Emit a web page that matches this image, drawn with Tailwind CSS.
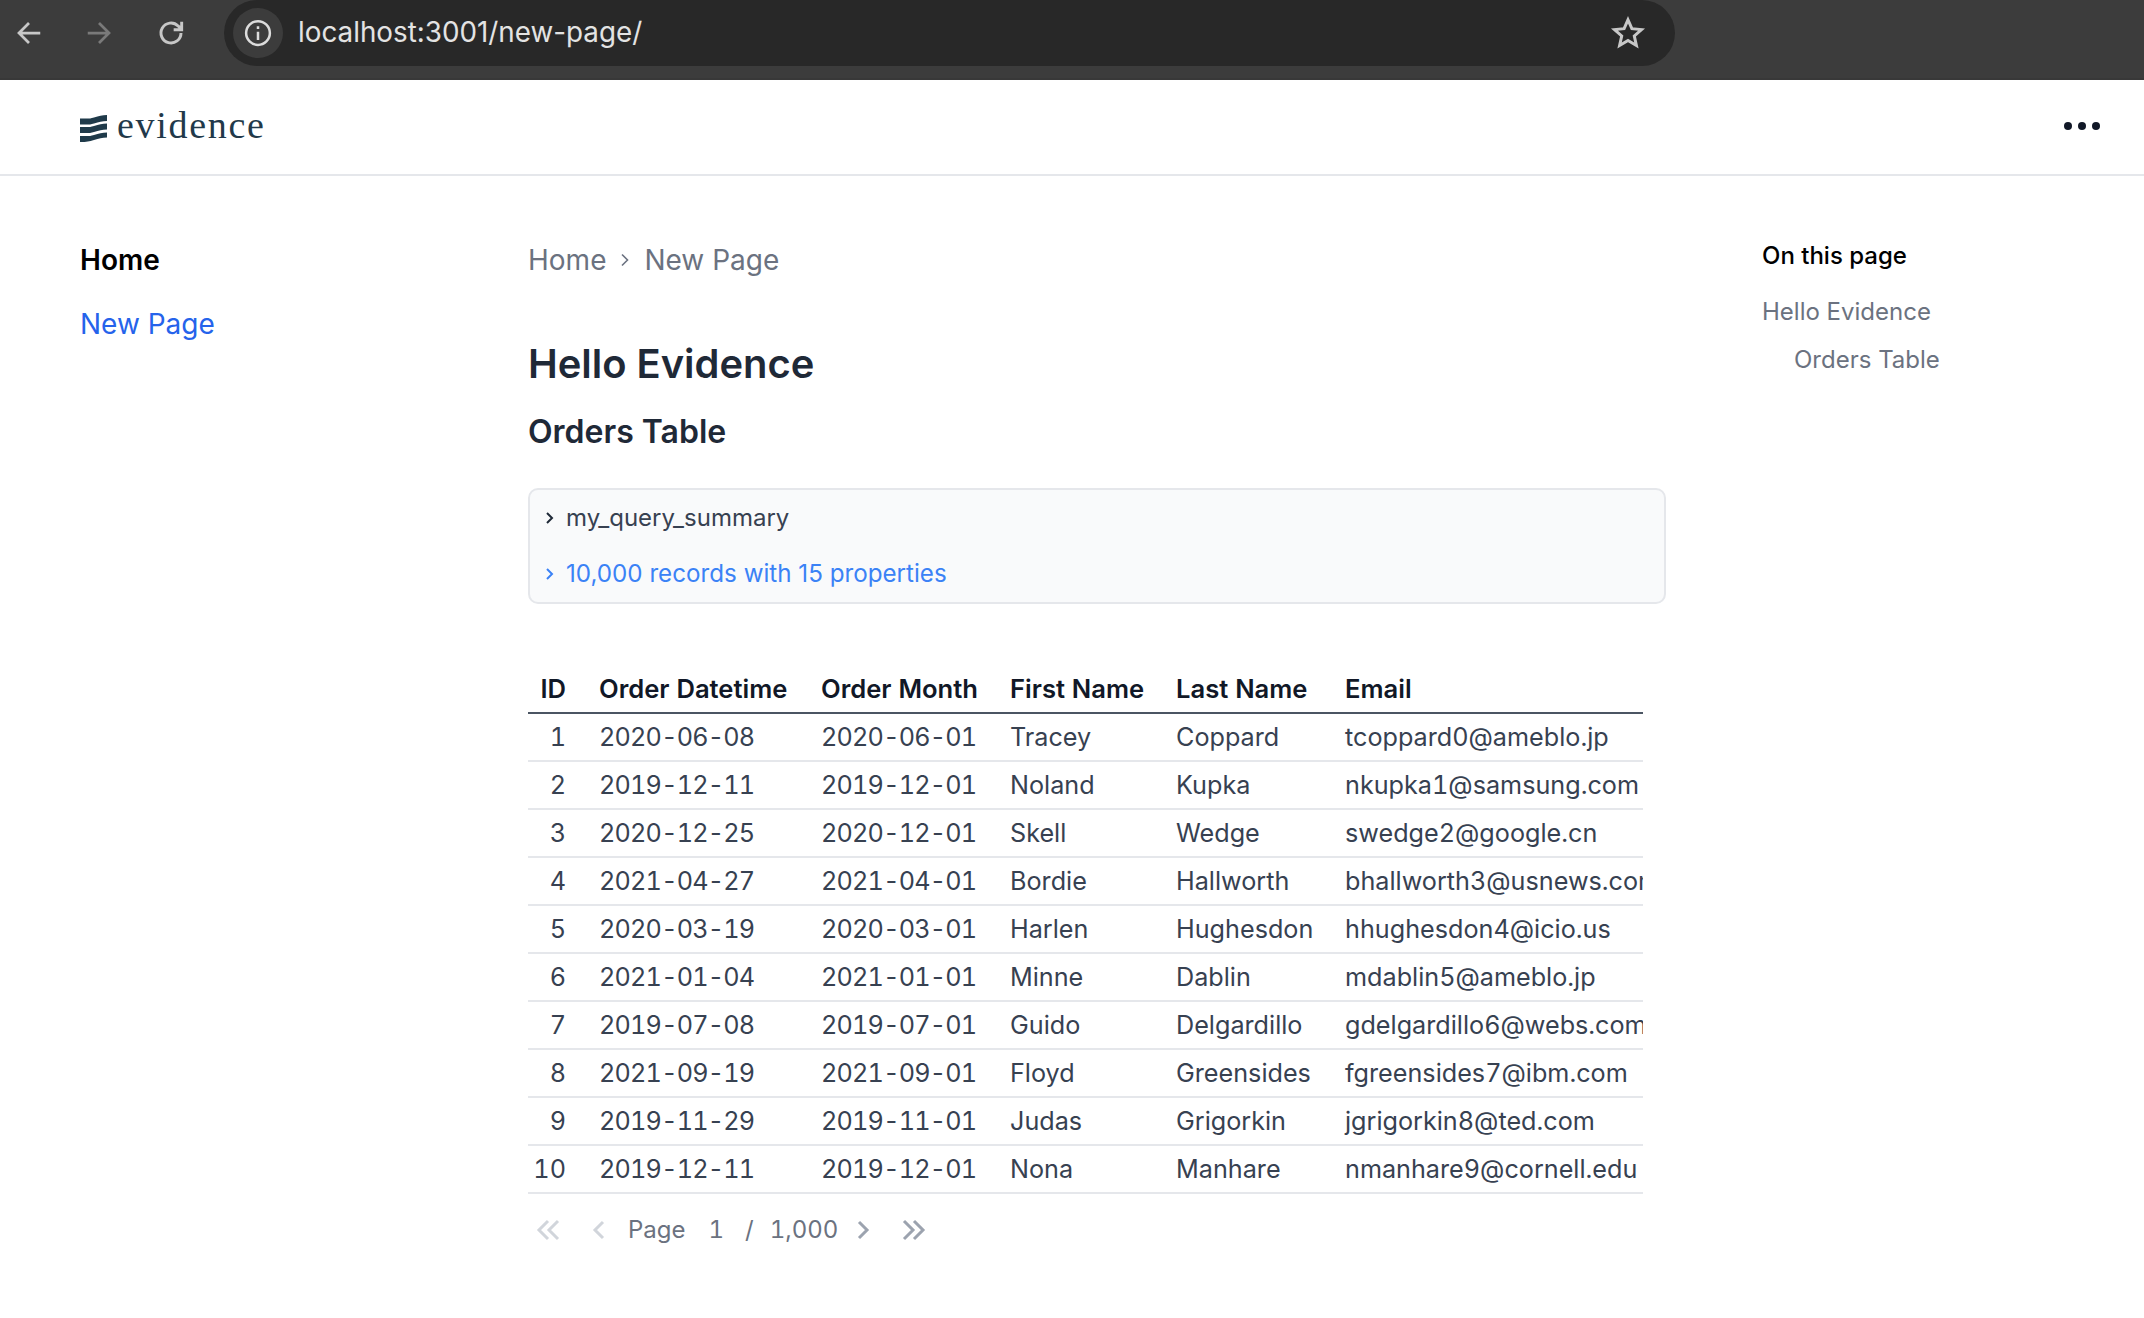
<!DOCTYPE html>
<html lang="en">
<head>
    <meta charset="UTF-8">
    <title>Hello Evidence</title>
    <script src="https://cdn.jsdelivr.net/npm/@tailwindcss/browser@4"></script>
</head>
<body class="bg-white min-h-screen font-['Inter',sans-serif] overflow-hidden">
    <!-- Browser chrome -->
    <div class="h-[80px] bg-[#3c3c3c] border-b-2 border-[#383838] flex items-start">
        <div class="w-[224px] h-[66px] flex items-center shrink-0">
            <svg class="ml-[14px] w-[30px] h-[30px]" viewBox="0 0 24 24" fill="none" stroke="#c7c7c7" stroke-width="2.2"><path d="M21 12H4M12 4l-8 8 8 8"/></svg>
            <svg class="ml-[40px] w-[30px] h-[30px]" viewBox="0 0 24 24" fill="none" stroke="#7a7a7a" stroke-width="2.2"><path d="M3 12h17M12 4l8 8-8 8"/></svg>
            <svg class="ml-[41px] w-[32px] h-[32px]" viewBox="0 0 24 24" fill="none" stroke="#c7c7c7" stroke-width="2.2"><path d="M19.5 12a7.500 7.500 0 1 1-2.200-5.300L20 9.200M20 3.500v6h-6"/></svg>
        </div>
        <div class="w-[1451px] h-[66px] bg-[#282828] rounded-[33px] flex items-center pl-[9px] pr-[29px]">
            <div class="w-[50px] h-[50px] rounded-full bg-[#3c3c3c] flex items-center justify-center">
                <svg class="w-[30px] h-[30px]" viewBox="0 0 24 24" fill="none" stroke="#dcdcdc" stroke-width="2"><circle cx="12" cy="12" r="9.500"/><path d="M12 11v6.500M12 6.500v2.200"/></svg>
            </div>
            <span class="ml-[15px] text-[27.800px] text-[#e3e3e3] -mt-[1px]">localhost:3001/new-page/</span>
            <svg class="ml-auto w-[36px] h-[36px] -mt-[1px]" viewBox="0 0 24 24" fill="none" stroke="#c7c7c7" stroke-width="2"><path d="M12 3.200l2.600 5.900 6.400.6-4.800 4.300 1.400 6.300L12 17l-5.600 3.300 1.400-6.300L3 9.700l6.400-.6z"/></svg>
        </div>
    </div>

    <!-- Header -->
    <header class="h-[96px] border-b-2 border-[#e5e7eb] flex items-center justify-between pl-[80px] pr-[44px] pb-[3px]">
        <div class="flex items-center">
            <svg class="w-[27px] h-[27px] mt-[6px]" viewBox="0 0 27 27" fill="#1f3a4a"><path d="M0 3.500C7 3.500 9 4 14 2.500S22 0 27 0v6C22 6 19 7 14 8.500S7 9.500 0 9.500zM0 12C7 12 9 12.500 14 11s8-2.500 13-2.500v6C22 14.500 19 15.500 14 17S7 18 0 18zM0 21C7 21 9 21.500 14 20s8-2.500 13-2.500v5C22 22.500 19 23.500 14 25S7 27 0 27z"/></svg>
            <span class="ml-[10px] text-[38px] tracking-[1.700px] leading-none text-[#22394a] font-['Liberation_Serif',serif] -mt-[1px]">evidence</span>
        </div>
        <div class="flex gap-[6px]">
            <span class="w-[8px] h-[8px] rounded-full bg-[#111827]"></span>
            <span class="w-[8px] h-[8px] rounded-full bg-[#111827]"></span>
            <span class="w-[8px] h-[8px] rounded-full bg-[#111827]"></span>
        </div>
    </header>

    <div class="flex">
        <!-- Sidebar -->
        <nav class="w-[528px] pl-[80px] pt-[67px] text-[28px] shrink-0">
            <div class="font-semibold text-black leading-[34px]">Home</div>
            <a class="block mt-[30px] text-[#2563eb] leading-[34px]">New Page</a>
        </nav>

        <!-- Main Content -->
        <main class="w-[1138px] shrink-0 pt-[67px]">
            <div class="flex items-center text-[28px] leading-[34px] text-[#6b7280]">
                <span>Home</span>
                <svg class="w-[14px] h-[14px] mx-[12px]" viewBox="0 0 14 14" fill="none" stroke="#6b7280" stroke-width="1.600"><path d="M4 1.500L9.500 7 4 12.500"/></svg>
                <span>New Page</span>
            </div>
            <h1 class="mt-[61px] text-[39.900px] leading-[52px] font-semibold text-[#1f2937]">Hello Evidence</h1>
            <h2 class="mt-[16px] text-[32px] leading-[52px] font-semibold text-[#1f2937]">Orders Table</h2>

            <div class="mt-[30px] h-[116px] bg-[#f9fafb] border-2 border-[#e5e7eb] rounded-[10px] px-[15px] text-[24px]">
                <div class="h-[56px] flex items-center text-[#374151]">
                    <svg class="w-[10px] h-[14px]" viewBox="0 0 10 14" fill="none" stroke="#1f2937" stroke-width="2"><path d="M2 2l5 5-5 5"/></svg>
                    <span class="ml-[11px]">my_query_summary</span>
                </div>
                <div class="h-[56px] flex items-center text-[#3b82f6]">
                    <svg class="w-[10px] h-[14px]" viewBox="0 0 10 14" fill="none" stroke="#3b82f6" stroke-width="2"><path d="M2 2l5 5-5 5"/></svg>
                    <span class="ml-[11px] text-[24.200px]">10,000 records with 15 properties</span>
                </div>
            </div>

            <!-- Orders -->
            <div class="mt-[61px] w-[1115px] overflow-hidden">
                <table class="table-fixed w-[1115px] text-[25.200px] text-[#374151] tabular-nums [&_td]:pt-[2px] [&_th]:pt-[2px]">
                    <colgroup>
                        <col class="w-[54px]"><col class="w-[222px]"><col class="w-[189px]"><col class="w-[166px]"><col class="w-[169px]"><col class="w-[315px]">
                    </colgroup>
                    <thead>
                        <tr class="h-[48px] border-b-2 border-[#4b5563] text-[#111827] text-[25.600px] text-left">
                            <th class="pr-[16px] text-right font-semibold">ID</th>
                            <th class="pl-[17px] font-semibold whitespace-nowrap">Order Datetime</th>
                            <th class="pl-[17px] font-semibold whitespace-nowrap">Order Month</th>
                            <th class="pl-[17px] font-semibold whitespace-nowrap">First Name</th>
                            <th class="pl-[17px] font-semibold whitespace-nowrap">Last Name</th>
                            <th class="pl-[17px] font-semibold whitespace-nowrap">Email</th>
                        </tr>
                    </thead>
                    <tbody class="[&_td:nth-child(2)]:tracking-[-0.800px] [&_td:nth-child(3)]:tracking-[-0.800px]">
                        <tr class="h-[48px] border-b-2 border-[#e5e7eb]"><td class="pr-[16px] text-right">1</td><td class="pl-[17px]">2020-06-08</td><td class="pl-[17px]">2020-06-01</td><td class="pl-[17px]">Tracey</td><td class="pl-[17px]">Coppard</td><td class="pl-[17px] whitespace-nowrap">tcoppard0@ameblo.jp</td></tr>
                        <tr class="h-[48px] border-b-2 border-[#e5e7eb]"><td class="pr-[16px] text-right">2</td><td class="pl-[17px]">2019-12-11</td><td class="pl-[17px]">2019-12-01</td><td class="pl-[17px]">Noland</td><td class="pl-[17px]">Kupka</td><td class="pl-[17px] whitespace-nowrap">nkupka1@samsung.com</td></tr>
                        <tr class="h-[48px] border-b-2 border-[#e5e7eb]"><td class="pr-[16px] text-right">3</td><td class="pl-[17px]">2020-12-25</td><td class="pl-[17px]">2020-12-01</td><td class="pl-[17px]">Skell</td><td class="pl-[17px]">Wedge</td><td class="pl-[17px] whitespace-nowrap">swedge2@google.cn</td></tr>
                        <tr class="h-[48px] border-b-2 border-[#e5e7eb]"><td class="pr-[16px] text-right">4</td><td class="pl-[17px]">2021-04-27</td><td class="pl-[17px]">2021-04-01</td><td class="pl-[17px]">Bordie</td><td class="pl-[17px]">Hallworth</td><td class="pl-[17px] whitespace-nowrap">bhallworth3@usnews.com</td></tr>
                        <tr class="h-[48px] border-b-2 border-[#e5e7eb]"><td class="pr-[16px] text-right">5</td><td class="pl-[17px]">2020-03-19</td><td class="pl-[17px]">2020-03-01</td><td class="pl-[17px]">Harlen</td><td class="pl-[17px]">Hughesdon</td><td class="pl-[17px] whitespace-nowrap">hhughesdon4@icio.us</td></tr>
                        <tr class="h-[48px] border-b-2 border-[#e5e7eb]"><td class="pr-[16px] text-right">6</td><td class="pl-[17px]">2021-01-04</td><td class="pl-[17px]">2021-01-01</td><td class="pl-[17px]">Minne</td><td class="pl-[17px]">Dablin</td><td class="pl-[17px] whitespace-nowrap">mdablin5@ameblo.jp</td></tr>
                        <tr class="h-[48px] border-b-2 border-[#e5e7eb]"><td class="pr-[16px] text-right">7</td><td class="pl-[17px]">2019-07-08</td><td class="pl-[17px]">2019-07-01</td><td class="pl-[17px]">Guido</td><td class="pl-[17px]">Delgardillo</td><td class="pl-[17px] whitespace-nowrap">gdelgardillo6@webs.com</td></tr>
                        <tr class="h-[48px] border-b-2 border-[#e5e7eb]"><td class="pr-[16px] text-right">8</td><td class="pl-[17px]">2021-09-19</td><td class="pl-[17px]">2021-09-01</td><td class="pl-[17px]">Floyd</td><td class="pl-[17px]">Greensides</td><td class="pl-[17px] whitespace-nowrap">fgreensides7@ibm.com</td></tr>
                        <tr class="h-[48px] border-b-2 border-[#e5e7eb]"><td class="pr-[16px] text-right">9</td><td class="pl-[17px]">2019-11-29</td><td class="pl-[17px]">2019-11-01</td><td class="pl-[17px]">Judas</td><td class="pl-[17px]">Grigorkin</td><td class="pl-[17px] whitespace-nowrap">jgrigorkin8@ted.com</td></tr>
                        <tr class="h-[48px] border-b-2 border-[#e5e7eb]"><td class="pr-[16px] text-right">10</td><td class="pl-[17px]">2019-12-11</td><td class="pl-[17px]">2019-12-01</td><td class="pl-[17px]">Nona</td><td class="pl-[17px]">Manhare</td><td class="pl-[17px] whitespace-nowrap">nmanhare9@cornell.edu</td></tr>
                    </tbody>
                </table>
            </div>

            <!-- Pagination -->
            <div class="mt-[19px] flex items-center h-[34px] pl-[8px] text-[24px] text-[#6b7280] tabular-nums">
                <svg class="w-[24px] h-[22px]" viewBox="0 0 24 22" fill="none" stroke="#d1d5db" stroke-width="3"><path d="M12 2l-9 9 9 9M22 2l-9 9 9 9"/></svg>
                <svg class="ml-[32px] w-[13px] h-[22px]" viewBox="0 0 13 22" fill="none" stroke="#d1d5db" stroke-width="3"><path d="M11 3l-8 8 8 8"/></svg>
                <span class="ml-[23px]">Page</span>
                <span class="ml-[23px]">1</span>
                <span class="ml-[21px]">/</span>
                <span class="ml-[16px]">1,000</span>
                <svg class="ml-[19px] w-[13px] h-[22px]" viewBox="0 0 13 22" fill="none" stroke="#9ca3af" stroke-width="3"><path d="M2 3l8 8-8 8"/></svg>
                <svg class="ml-[32px] w-[24px] h-[22px]" viewBox="0 0 24 22" fill="none" stroke="#9ca3af" stroke-width="3"><path d="M2 2l9 9-9 9M12 2l9 9-9 9"/></svg>
            </div>
        </main>

        <!-- On this page -->
        <aside class="ml-[96px] pt-[68px] text-[24px]">
            <div class="font-medium text-black leading-[30px] -mt-[3px]">On this page</div>
            <div class="mt-[26px] text-[#6b7280] leading-[30px]">Hello Evidence</div>
            <div class="mt-[18px] ml-[32px] text-[#6b7280] leading-[30px]">Orders Table</div>
        </aside>
    </div>
</body>
</html>
